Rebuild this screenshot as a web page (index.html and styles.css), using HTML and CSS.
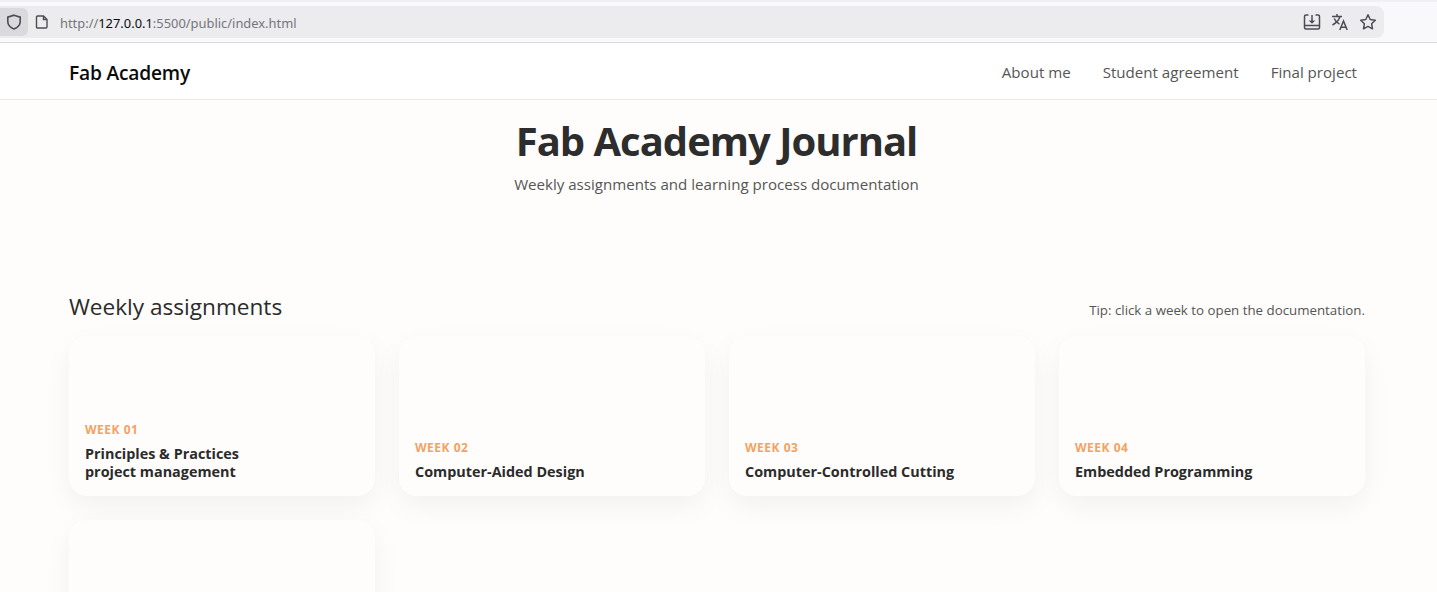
FILE: index.html
```html
<!DOCTYPE html>
<html lang="en">
<head>
<meta charset="utf-8">
<title>Fab Academy Journal</title>
<link rel="stylesheet" href="styles.css">
</head>
<body>
<div class="chrome">
  <div class="urlbar">
    <div class="left">
      <span class="shield">
        <svg width="16" height="16" viewBox="0 0 16 16" fill="none" stroke="#4c4c55" stroke-width="1.6"><path d="M8 1.2 L14.2 3.2 V7.5 C14.2 11 11.5 13.6 8 14.9 C4.5 13.6 1.8 11 1.8 7.5 V3.2 Z"/></svg>
      </span>
      <svg class="page" width="14" height="14" viewBox="0 0 14 14" fill="none" stroke="#4c4c55" stroke-width="1.4"><path d="M2.5 1h6l3.5 3.5v7.5a1 1 0 0 1-1 1h-8.500a1 1 0 0 1-1-1V2a1 1 0 0 1 1-1z"/><path d="M8.500 1v3.500h3.500"/></svg>
      <span class="url">http://<b>127.0.0.1</b>:5500/public/index.html</span>
    </div>
    <div class="actions">
      <svg width="18" height="18" viewBox="0 0 18 18" fill="none" stroke="#4c4c55" stroke-width="1.5"><path d="M5.5 2H3a1.500 1.500 0 0 0-1.500 1.500v11A1.500 1.500 0 0 0 3 16h12a1.500 1.500 0 0 0 1.500-1.500v-11A1.500 1.500 0 0 0 15 2h-2.500"/><path d="M1.500 12.500h15"/><path d="M9 2v7"/><path d="M5.800 7.500h6.400L9 10.800z" fill="#4c4c55" stroke="none"/></svg>
      <svg width="18" height="18" viewBox="0 0 18 18" fill="none" stroke="#4c4c55" stroke-width="1.5"><path d="M1 3.500h10M6 1v2.500M9 3.500C8 7 5 10 1.500 12M3.200 5.500c1 2.500 3 4.500 5.300 5.700"/><path d="M8.800 17l3.700-9 3.700 9M10 14.300h5"/></svg>
      <svg width="18" height="18" viewBox="0 0 18 18" fill="none" stroke="#4c4c55" stroke-width="1.5" stroke-linejoin="round"><path d="M9 1.800l2.200 4.700 5.100.7-3.700 3.500.9 5.100L9 13.400l-4.500 2.400.9-5.100-3.700-3.500 5.100-.7z"/></svg>
    </div>
  </div>
</div>
<nav class="nav">
  <a class="brand">Fab Academy</a>
  <div class="links">
    <a>About me</a>
    <a>Student agreement</a>
    <a>Final project</a>
  </div>
</nav>
<header class="hero">
  <h1>Fab Academy Journal</h1>
  <p>Weekly assignments and learning process documentation</p>
</header>
<main class="main">
  <div class="section-head">
    <h2>Weekly assignments</h2>
    <span class="tip">Tip: click a week to open the documentation.</span>
  </div>
  <div class="grid">
    <article class="card"><div class="week">WEEK 01</div><div class="name">Principles &amp; Practices<br>project management</div></article>
    <article class="card"><div class="week">WEEK 02</div><div class="name">Computer-Aided Design</div></article>
    <article class="card"><div class="week">WEEK 03</div><div class="name">Computer-Controlled Cutting</div></article>
    <article class="card"><div class="week">WEEK 04</div><div class="name">Embedded Programming</div></article>
    <article class="card"></article>
  </div>
</main>
</body>
</html>
```
FILE: styles.css
```css
* { box-sizing: border-box; }
html, body { margin: 0; height: 592px; overflow: hidden; }
body { background: #fffdfb; font-family: "Open Sans", "Noto Sans", sans-serif; color: #2b2b2b; }

.chrome { height: 43px; padding: 4px 53px 4px 0; background: #f9f9fb; border-top: 2px solid #f0f0f4; border-bottom: 1px solid #dcdce0; }
.urlbar { height: 32px; background: #ececef; border-radius: 0 8px 8px 0; display: flex; align-items: center; justify-content: space-between; padding: 0 7px 0 0; }
.left { display: flex; align-items: center; }
.shield { width: 28px; height: 28px; background: #dadade; border-radius: 0 6px 6px 0; display: flex; align-items: center; justify-content: center; }
.page { margin-left: 7px; }
.url { margin-left: 11px; padding-top: 2px; font-family: "Noto Sans", sans-serif; font-size: 12.9px; color: #75757c; }
.url b { font-weight: 400; color: #0c0c10; }
.actions { display: flex; gap: 10px; align-items: center; }

.nav { height: 57px; background: #fff; border-bottom: 1px solid #ece9e6; display: flex; align-items: center; justify-content: space-between; padding: 2px 80px 0 69px; }
.brand { font-size: 19.2px; font-weight: 600; color: #0b0b0b; letter-spacing: -0.2px; }
.links { display: flex; gap: 32px; font-size: 15.1px; color: #555; }

.hero { text-align: center; padding: 16px 4px 0 0; height: 170px; }
.hero h1 { margin: 0; font-size: 40px; line-height: 50px; font-weight: 700; color: #2d2d2d; letter-spacing: -1px; }
.hero p { margin: 8px 0 0; font-size: 15.1px; line-height: 20px; color: #555; }

.main { padding: 0 72px 0 69px; }
.section-head { display: flex; justify-content: space-between; align-items: baseline; height: 66px; padding-top: 22px; }
.section-head h2 { margin: 0; font-size: 22.6px; line-height: 30px; font-weight: 400; color: #2b2b2b; }
.tip { font-size: 13.3px; color: #555; }

.grid { display: grid; grid-template-columns: repeat(4, 306px); gap: 24px; }
.card { height: 160px; background: #fffdfb; border-radius: 18px; padding: 16px 16px 15px; display: flex; flex-direction: column; justify-content: flex-end; box-shadow: 0 10px 28px rgba(0,0,0,.05); }
.week { font-size: 12px; line-height: 16px; font-weight: 700; letter-spacing: .5px; color: #f4a261; margin-bottom: 7px; }
.name { font-size: 14.4px; line-height: 18px; font-weight: 700; color: #2b2b2b; }
```
